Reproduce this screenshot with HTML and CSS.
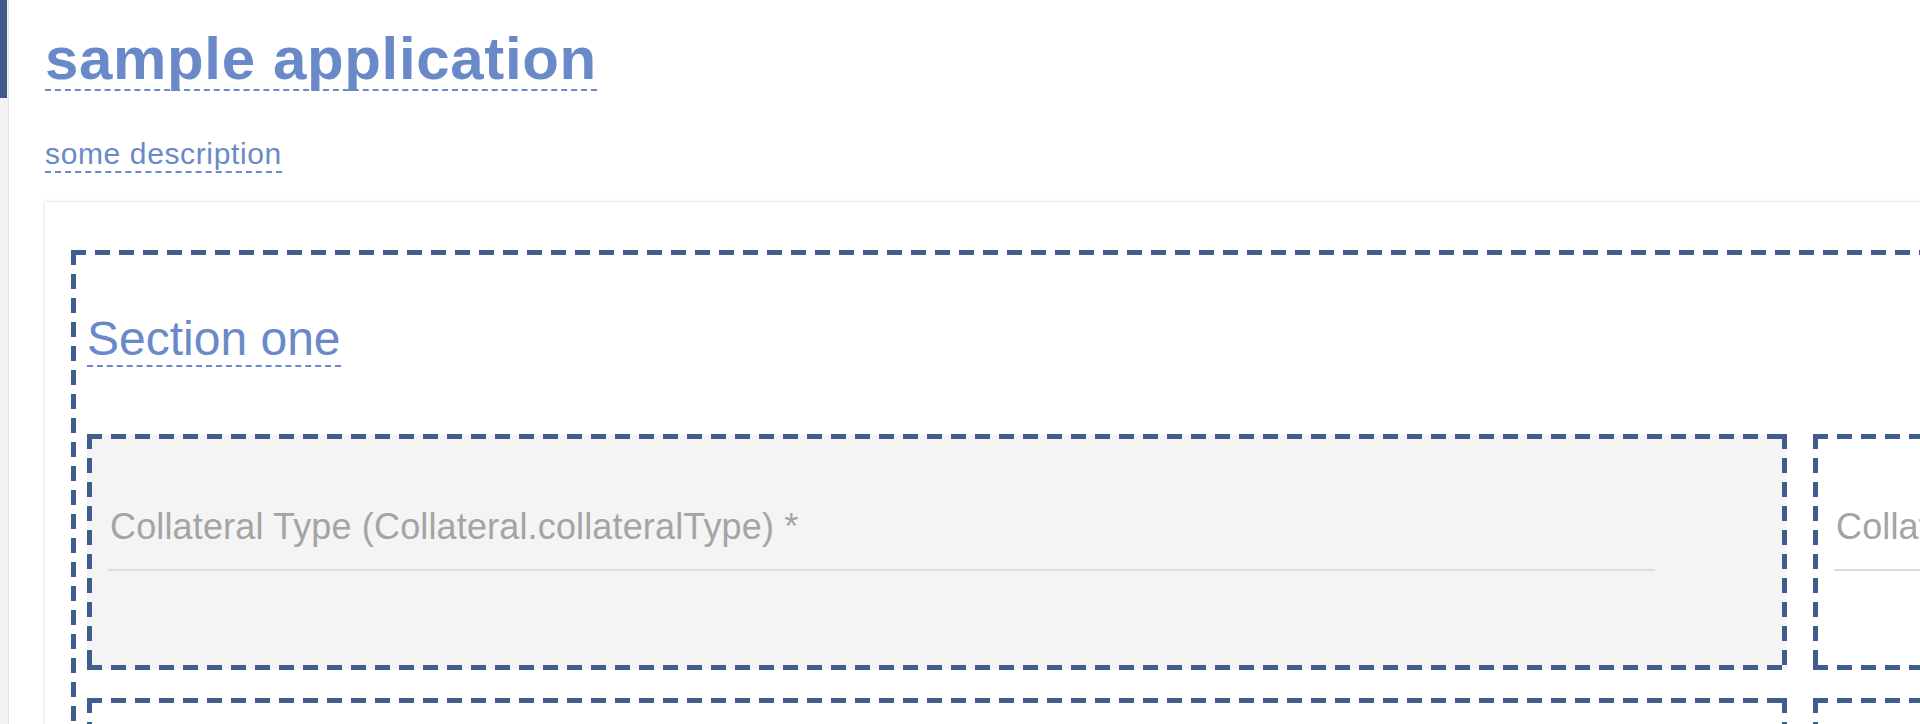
FILE: index.html
```html
<!DOCTYPE html>
<html lang="en">
<head>
    <meta charset="UTF-8">
    <meta name="viewport" content="width=device-width, initial-scale=1.0">
    <title>sample application</title>
    <link rel="stylesheet" href="styles.css">
</head>
<body>

<div class="layout">
    <aside class="sidebar">
        <div class="sidebar-top"></div>
    </aside>

    <main class="content">
        <h1 class="app-title"><span>sample application</span></h1>
        <p class="app-desc"><span>some description</span></p>

        <div class="card">
            <section class="section dashed-box">
                <h2 class="section-title"><span>Section one</span></h2>

                <div class="field-grid">
                    <div class="field dashed-box field-filled">
                        <label class="field-label">Collateral Type (Collateral.collateralType) *</label>
                        <div class="field-line"></div>
                    </div>
                    <div class="field dashed-box">
                        <label class="field-label">Collateral Value (Collateral.collateralValue) *</label>
                        <div class="field-line"></div>
                    </div>
                    <div class="field dashed-box">
                        <label class="field-label">Collateral Owner (Collateral.collateralOwner)</label>
                        <div class="field-line"></div>
                    </div>
                    <div class="field dashed-box">
                        <label class="field-label">Collateral Date (Collateral.collateralDate)</label>
                        <div class="field-line"></div>
                    </div>
                </div>
            </section>
        </div>
    </main>
</div>

</body>
</html>
```

FILE: styles.css
```css
html, body {
    margin: 0;
    padding: 0;
    overflow: hidden;
    background-color: #fff;
    font-family: "Liberation Sans", Arial, sans-serif;
}

.layout {
    display: flex;
    min-height: 724px;
}

.sidebar {
    flex: 0 0 8px;
    background-color: #f2f2f2;
    border-right: 1px solid #e2e2e2;
}

.sidebar-top {
    width: 7px;
    height: 98px;
    background-color: #3f5b88;
}

.content {
    padding-left: 35px;
}

.app-title {
    margin: 29px 0 0 1px;
    font-size: 60px;
    font-weight: bold;
    line-height: 1;
    color: #6a89c8;
    letter-spacing: 0.65px;
}

.app-title span,
.app-desc span,
.section-title span {
    display: inline-block;
    border-bottom: 2px dashed #6a89c8;
}

.app-desc {
    margin: 48px 0 0 1px;
    font-size: 30px;
    line-height: 1;
    color: #6a89c8;
    letter-spacing: 0.63px;
}

.app-desc span {
    padding-bottom: 2px;
}

.card {
    margin-top: 28px;
    width: 3600px;
    padding: 48px 26px 40px;
    background-color: #fff;
    border: 1px solid #ececec;
    box-shadow: 0 0 3px rgba(0, 0, 0, 0.08);
}

/* long dashes, drawn by hand since the browser's dashed border is too short */
.dashed-box {
    border: 5px solid transparent;
    background:
        repeating-linear-gradient(90deg, #3f5d8e 0 15px, transparent 15px 24px) top left / 100% 5px no-repeat border-box,
        repeating-linear-gradient(90deg, #3f5d8e 0 15px, transparent 15px 24px) bottom left / 100% 5px no-repeat border-box,
        repeating-linear-gradient(180deg, #3f5d8e 0 15px, transparent 15px 24px) top left / 5px 100% no-repeat border-box,
        repeating-linear-gradient(180deg, #3f5d8e 0 15px, transparent 15px 24px) top right / 5px 100% no-repeat border-box;
}

.section {
    padding: 60px 11px 40px;
}

.section-title {
    margin: 0;
    font-size: 48px;
    font-weight: normal;
    line-height: 1;
    color: #6a89c8;
}

.section-title span {
    padding-bottom: 2px;
}

.field-grid {
    margin-top: 67px;
    display: grid;
    grid-template-columns: 1700px 1700px;
    column-gap: 26px;
    row-gap: 28px;
}

.field {
    box-sizing: border-box;
    height: 236px;
    padding: 70px 127px 0 16px;
}

.field-filled {
    background-color: #f4f4f4;
}

.field-label {
    display: block;
    padding-left: 2px;
    font-size: 36px;
    line-height: 1;
    color: #a4a4a4;
    letter-spacing: 0.15px;
}

.field-line {
    margin-top: 24px;
    height: 2px;
    background-color: #dcdcdc;
}
```
